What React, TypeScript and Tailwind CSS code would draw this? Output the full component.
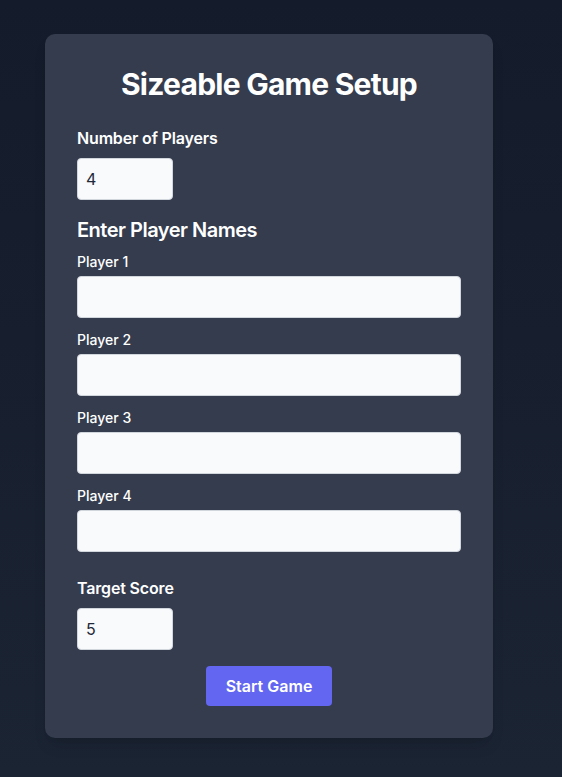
import React, { useState } from "react";

function App() {
  const [count, setCount] = useState("4");
  const [names, setNames] = useState<string[]>(["", "", "", ""]);
  const [target, setTarget] = useState("5");

  return (
    <div
      className="min-h-screen w-full bg-gradient-to-b from-[#141b2a] to-[#1b2433] pl-[45px] pt-[34px] pb-[39px]"
      style={{ fontFamily: "Inter, 'Noto Sans', sans-serif" }}
    >
      <div className="w-[448px] bg-[#343c4e] rounded-[10px] p-8 shadow-lg">
        <h1 className="text-3xl font-bold tracking-tight text-white text-center mb-6">Sizeable Game Setup</h1>

        <label className="block text-white font-semibold tracking-[-0.01em] mb-2">Number of Players</label>
        <input
          type="number"
          value={count}
          onChange={(e) => setCount(e.target.value)}
          className="w-24 px-2 py-2 bg-[#f8fafc] text-[#1f2937] border border-gray-300 rounded focus:outline-0"
        />

        <h2 className="text-xl font-semibold tracking-tight text-white mt-4 mb-2">Enter Player Names</h2>
        <div className="flex flex-col gap-3">
          {names.map((n, i) => (
            <div key={i}>
              <label className="block text-sm font-medium text-white mb-1">Player {i + 1}</label>
              <input
                type="text"
                value={n}
                onChange={(e) => {
                  const t = [...names];
                  t[i] = e.target.value;
                  setNames(t);
                }}
                className="w-full h-[42px] px-3 bg-[#f8fafc] text-[#1f2937] border border-gray-300 rounded focus:outline-0"
              />
            </div>
          ))}
        </div>

        <label className="block text-white font-semibold tracking-[-0.01em] mt-6 mb-2">Target Score</label>
        <input
          type="number"
          value={target}
          onChange={(e) => setTarget(e.target.value)}
          className="w-24 px-2 py-2 bg-[#f8fafc] text-[#1f2937] border border-gray-300 rounded focus:outline-0"
        />

        <div className="flex justify-center mt-4">
          <button className="h-10 px-5 bg-[#6366f1] text-white font-semibold rounded">Start Game</button>
        </div>
      </div>
    </div>
  );
}

export default App;
